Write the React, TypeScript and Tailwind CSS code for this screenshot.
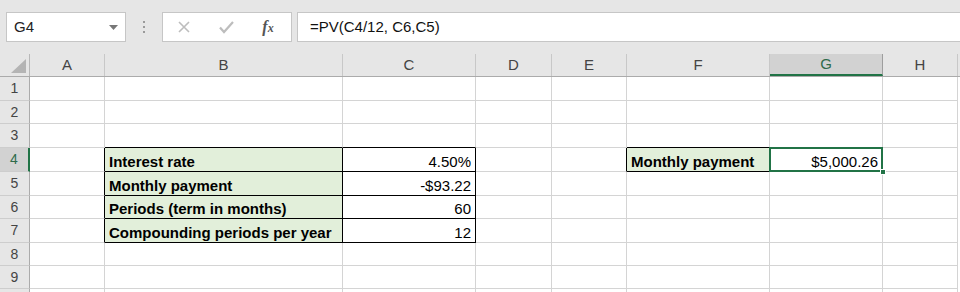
import React from "react";

type Cell = {
  text?: string;
  bold?: boolean;
  right?: boolean;
  fill?: boolean;
  rb?: boolean; // black right border
  bb?: boolean; // black bottom border
  selected?: boolean;
};

const cols = ["A", "B", "C", "D", "E", "F", "G", "H"];
const widths = ["w-[75px]", "w-[238px]", "w-[133px]", "w-[76px]", "w-[75px]", "w-[143px]", "w-[113px]", "w-[75px]"];
const heights = ["h-[24px]", "h-[23px]", "h-[24px]", "h-[24px]", "h-[24px]", "h-[23px]", "h-[24px]", "h-[23px]", "h-[23px]"];

const empty = (): Cell[] => cols.map(() => ({}));

const rows: Cell[][] = Array.from({ length: 9 }, empty);
// row 3: bottoms of B,C,F black (top border of the boxes)
rows[2][1].bb = true;
rows[2][2].bb = true;
rows[2][5].bb = true;

const table = [
  ["Interest rate", "4.50%"],
  ["Monthly payment", "-$93.22"],
  ["Periods (term in months)", "60"],
  ["Compounding periods per year", "12"],
];
table.forEach(([label, value], i) => {
  const r = rows[3 + i];
  r[0].rb = true;
  r[1] = { text: label, bold: true, fill: true, rb: true, bb: true };
  r[2] = { text: value, right: true, rb: true, bb: true };
});
rows[3][4].rb = true;
rows[3][5] = { text: "Monthly payment", bold: true, fill: true, rb: true, bb: true };
rows[3][6] = { text: "$5,000.26", right: true, selected: true };

const App: React.FC = () => {
  return (
    <div className="w-[960px] h-[292px] overflow-hidden bg-white font-['Liberation_Sans',Arial,sans-serif] text-[#000]">
      {/* formula bar */}
      <div className="h-[54px] bg-[#e6e6e6] pt-[12px] pl-[6px] flex items-start">
        <div className="w-[120px] h-[30px] bg-white border border-[#c6c6c6] flex items-center justify-between pl-[7px] pr-[7px]">
          <span className="text-[15px] text-[#222]">G4</span>
          <svg width="9" height="5" viewBox="0 0 9 5">
            <path d="M0 0h9L4.5 5z" fill="#777" />
          </svg>
        </div>
        <div className="w-[36px] h-[30px] flex flex-col items-center justify-center gap-[3px]">
          <span className="w-[2px] h-[2px] bg-[#9a9a9a]" />
          <span className="w-[2px] h-[2px] bg-[#9a9a9a]" />
          <span className="w-[2px] h-[2px] bg-[#9a9a9a]" />
        </div>
        <div className="w-[130px] h-[30px] bg-white border border-[#c6c6c6] flex items-center">
          <svg width="42" height="30" viewBox="0 0 42 30">
            <path d="M16 10l10 10M26 10L16 20" stroke="#bdbdbd" strokeWidth="1.6" />
          </svg>
          <svg width="42" height="30" viewBox="0 0 42 30">
            <path d="M15 15.5l4 4.5 9-10" stroke="#bdbdbd" strokeWidth="2.2" fill="none" />
          </svg>
          <span className="w-[42px] text-center font-['Liberation_Serif',serif] italic font-bold text-[16px] text-[#555]">
            f<span className="text-[12px]">x</span>
          </span>
        </div>
        <div className="ml-[5px] flex-1 h-[30px] bg-white border border-r-0 border-[#c6c6c6] flex items-center pl-[12px]">
          <span className="text-[15px] text-[#111]">=PV(C4/12, C6,C5)</span>
        </div>
      </div>

      {/* column headers */}
      <div className="flex h-[23px] bg-[#e6e6e6] border-b border-[#ababab]">
        <div className="w-[30px] h-full border-r border-[#b8b8b8] relative">
          <svg className="absolute left-[11px] top-[5px]" width="15" height="14" viewBox="0 0 15 14">
            <path d="M15 0v14H0z" fill="#b4b4b4" />
          </svg>
        </div>
        {cols.map((c, i) => (
          <div
            key={c}
            className={`${widths[i]} h-full flex items-center justify-center text-[15px] ${
              c === "G"
                ? "bg-[#d2d2d2] border-b-2 border-b-[#217346] text-[#2f6b4b] border-r border-r-[#9e9e9e]"
                : "text-[#444] border-r border-r-[#c8c8c8]"
            }`}
          >
            {c}
          </div>
        ))}
      </div>

      {/* rows */}
      {rows.map((row, ri) => (
        <div key={ri} className={`flex ${heights[ri]}`}>
          <div
            className={`w-[30px] h-full flex items-center justify-center text-[14px] border-b border-b-[#cdcdcd] ${
              ri === 3
                ? "bg-[#d2d2d2] text-[#2f6b4b] border-r-2 border-r-[#217346]"
                : "bg-[#e6e6e6] text-[#444] border-r border-r-[#ababab]"
            }`}
          >
            {ri + 1}
          </div>
          {row.map((cell, ci) => (
            <div
              key={ci}
              className={`${widths[ci]} h-full relative flex items-end pb-[2px] px-[4px] text-[15px] leading-none whitespace-nowrap border-r border-b ${
                cell.rb ? "border-r-[#000]" : "border-r-[#d4d4d4]"
              } ${cell.bb ? "border-b-[#000]" : "border-b-[#d4d4d4]"} ${
                cell.fill ? "bg-[#e2efda]" : "bg-white"
              } ${cell.right ? "justify-end" : ""} ${cell.bold ? "font-bold" : ""}`}
            >
              {cell.text}
              {cell.selected && (
                <>
                  <div className="absolute -left-[1px] -top-[1px] -right-[1px] -bottom-[1px] border-2 border-[#217346] z-10" />
                  <div className="absolute -right-[4px] -bottom-[4px] w-[6px] h-[6px] bg-[#217346] border border-white z-20" />
                </>
              )}
            </div>
          ))}
        </div>
      ))}
      <div className="flex h-[10px]">
        <div className="w-[30px] h-full bg-[#e6e6e6] border-r border-[#ababab]" />
        {cols.map((c, i) => (
          <div key={c} className={`${widths[i]} h-full border-r border-[#d4d4d4]`} />
        ))}
      </div>
    </div>
  );
};

export default App;
